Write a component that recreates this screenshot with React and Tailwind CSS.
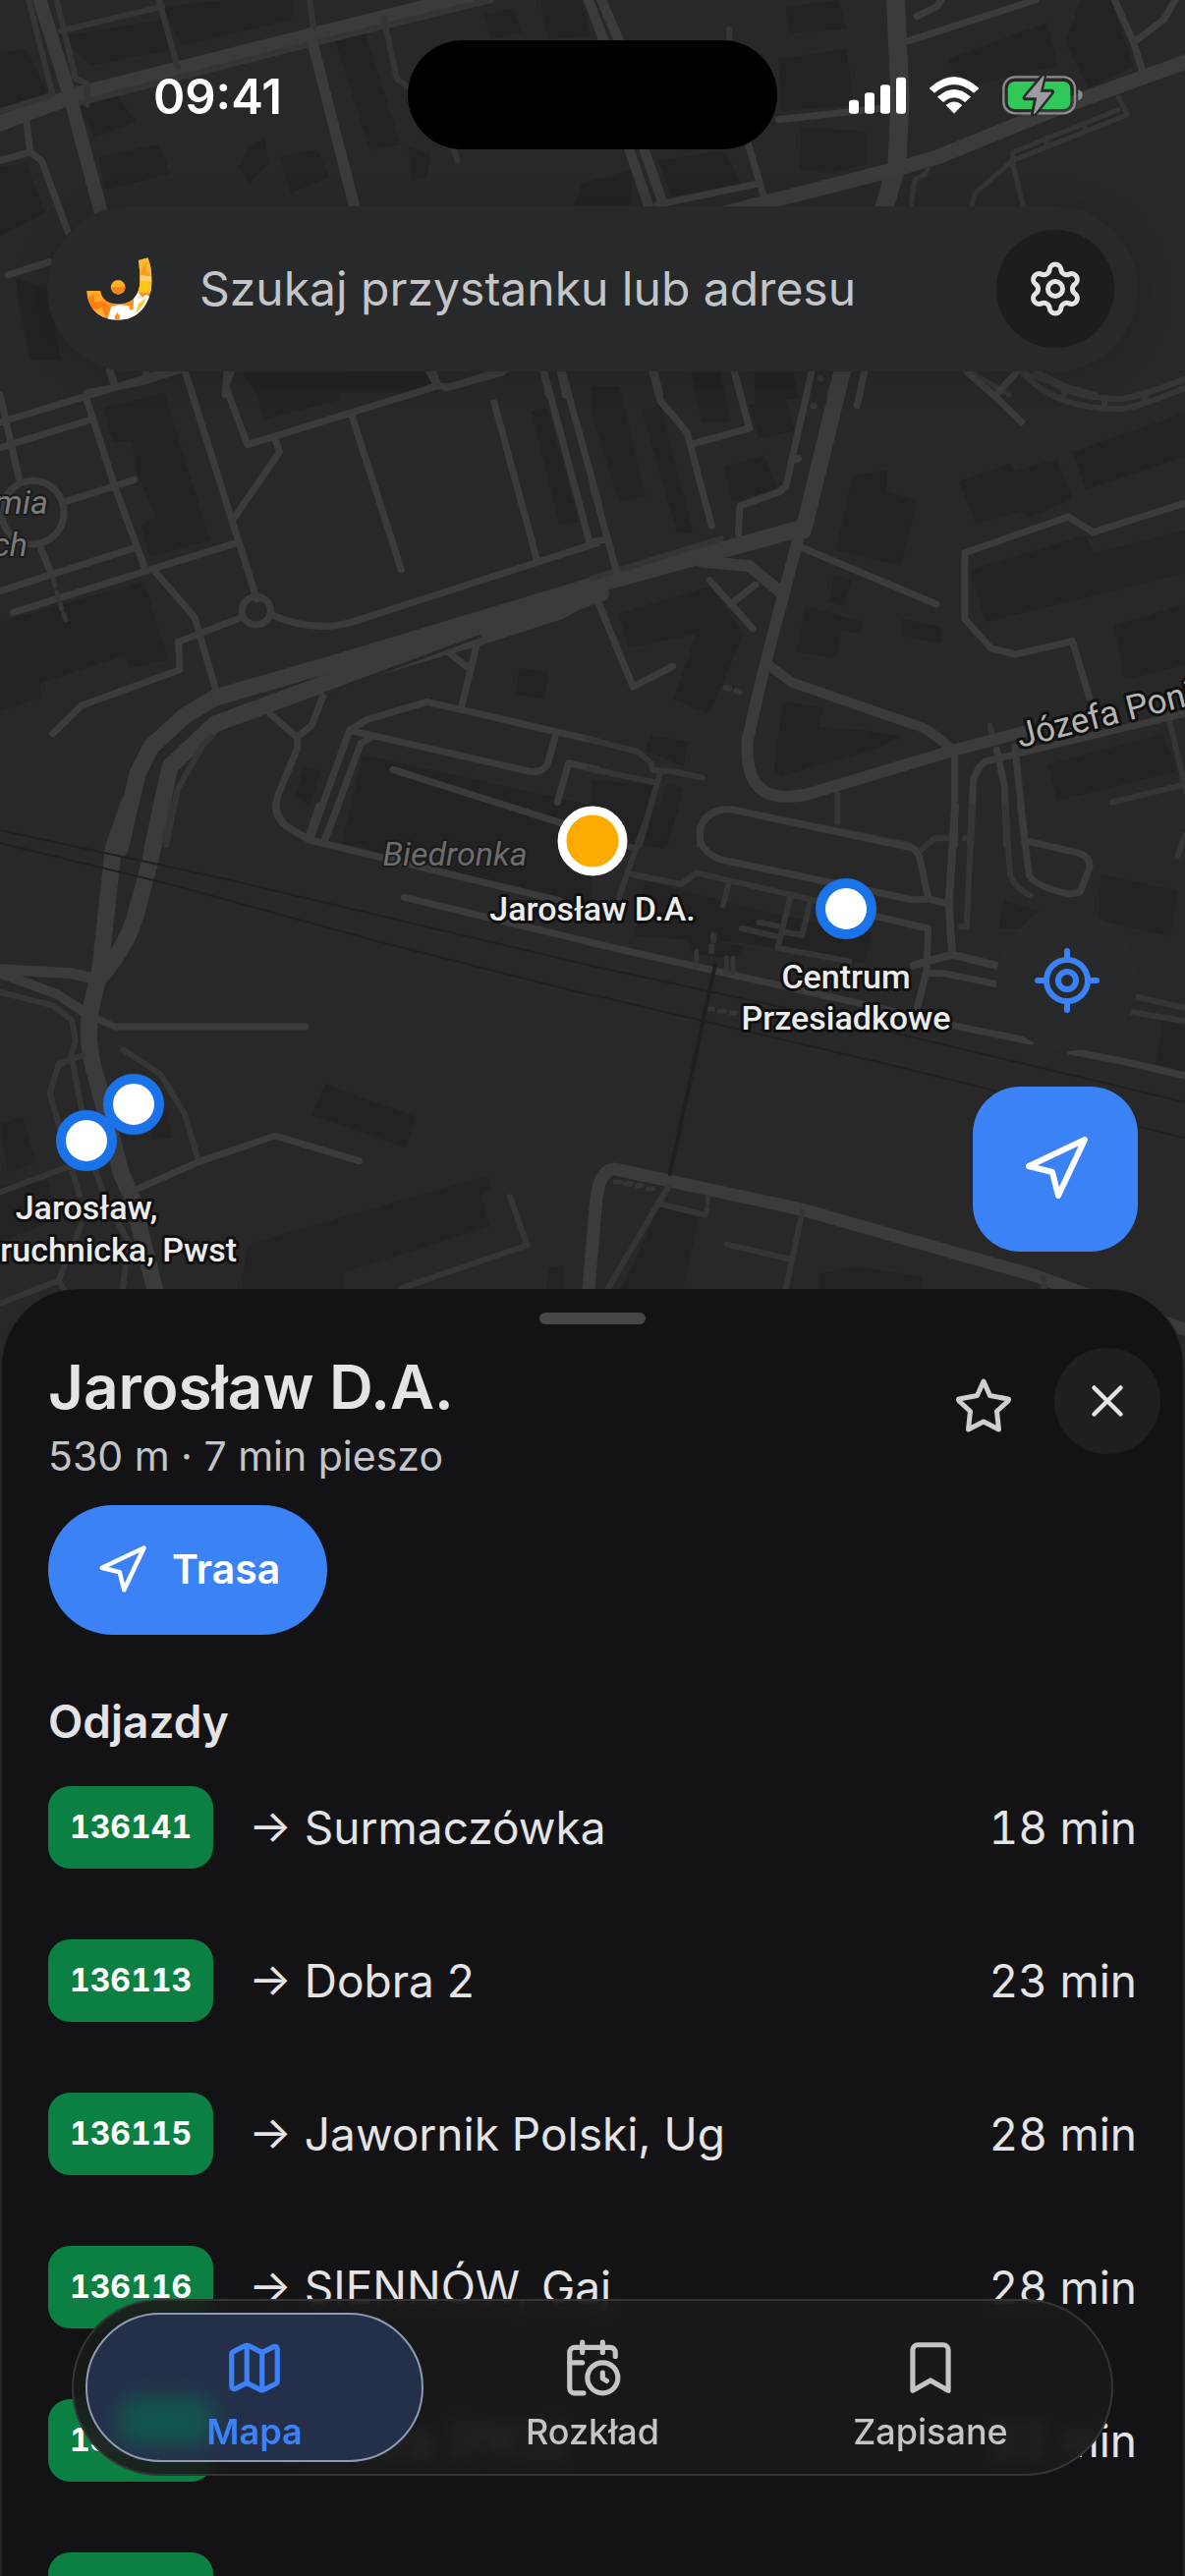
import {
  Bookmark,
  CalendarClock,
  LocateFixed,
  Map as MapIcon,
  Navigation,
  Settings,
  X,
} from "lucide-react";

const departures = [
  { line: "136141", to: "Surmaczówka", time: "18 min" },
  { line: "136113", to: "Dobra 2", time: "23 min" },
  { line: "136115", to: "Jawornik Polski, Ug", time: "28 min" },
  { line: "136116", to: "SIENNÓW, Gaj", time: "28 min" },
  { line: "136117", to: "Dobra (PKS)", time: "33 min" },
  { line: "136118", to: "Surmaczówka", time: "38 min" },
];

/* The street plan is split into tiles; each tile has its own drawing units. */
const tiles = [
  {
    place: "scale(.769133 .333333)",
    buildings:
      "M80 110L215 60L230 150L120 200ZM215 20L300 0H390L385 60L240 140ZM105 325L150 280L180 370L125 420ZM130 480L210 440L225 530L140 580ZM330 450L350 420L355 500L330 560L315 510ZM370 480L420 455L435 540L385 590ZM440 100L480 80L530 440L490 460ZM540 450L570 470L565 540L545 550ZM640 45L680 25L690 100L650 120ZM715 0H770L780 110L725 120ZM1040 20L1110 0L1120 90L1045 100ZM1030 180L1120 150L1130 320L1035 340ZM1255 180L1385 70L1400 200L1270 270ZM1430 0H1470L1500 200L1440 270L1410 130ZM1060 390L1145 400V500L1100 530L1058 515ZM870 490L960 460L980 560L890 600ZM0 160L35 150L65 290L0 330ZM0 510L35 500L60 650L0 720ZM770 560L835 520V625H760ZM320 1140L560 1133L580 1200H340ZM20 850L65 880L80 1100L40 1100Z",
    roads: [
      [16, "M-10 385L100 290L410 110L620 -10"],
      [6, "M95 320L410 135L650 0M75 0L100 240L115 255V320M38 0L70 290L0 340M410 0L415 90M210 0L235 205M80 95L215 20M508 55L525 240L545 275M600 450L605 490M965 90V130"],
      [14, "M52 -5L92 290L135 660"],
      [11, "M410 100L470 640"],
      [10, "M778 -5L800 130M795 -5L820 130M830 440L860 640M850 440L880 640"],
      [7, "M870 625L1005 560M990 440L1012 610M1030 365L1190 325M1195 130L1370 0M1213 50L1240 20L1245 0M1475 0L1500 130L1512 220M1500 130L1540 60L1555 0M35 370L40 465L0 490M40 465L55 490L90 710M10 840L65 800"],
      [5, "M1480 297L1492 350L1340 490M1480 335L1340 465V490M1385 420V445M1435 375V400M1340 490L1290 590L1285 640M1340 500L1355 640M1228 510L1225 530L1210 550L1205 640"],
      [19, "M1185 -5L1191 300L1187 500L1168 650"],
      [15, "M960 650L1180 520L1240 480L1400 330L1580 180"],
      [7, "M145 1125L152 1175M115 1200L190 1165L250 1120M300 1120V1150L298 1205M565 1120L578 1178M590 1185L680 1120M718 1120L726 1205M740 1120L748 1205M865 1120L873 1205M970 1120L980 1205"],
      [17, "M1118 1110L1105 1210"],
      [5, "M1280 1130L1335 1205M1345 1130L1380 1160L1450 1205M1370 1133L1420 1190"],
    ],
  },
  {
    place: "translate(0 380) scale(.384566 .333333)",
    buildings:
      "M275 105L435 60L555 510L395 560L375 460L415 440L360 300L350 210L300 210ZM0 760L380 635L445 875L345 900L330 860L105 945L110 990L0 1030ZM660 0H870L900 80L700 140ZM1405 115L1450 105L1530 455L1480 460ZM1375 900L1450 915L1440 995L1365 980ZM960 1165L1568 1320V1440H905ZM805 1200L850 1215L820 1315L780 1295Z",
    roads: [
      [7, "M0 150L440 -5M290 -5L302 35M385 0L400 15M0 227L238 142M228 75L305 350L385 600M0 65L50 320M165 395L355 325M0 665L350 535M35 730L625 518M490 -5L625 490L680 690M612 -5L597 40L655 218L1160 38L1190 42L1330 -3M1145 -5L1160 35M728 200L740 240L620 440M930 125L1062 600M1308 90L1420 565M1440 -5L1560 515M1488 -5L1585 400M715 735C780 770 850 785 930 760L1580 518M640 745L472 820L476 905L215 1015L140 1100M410 605L515 745L572 970"],
      [7, "M5 425A82 97 0 0 1 169 425A82 97 0 0 1 5 425M105 525L135 610M640 725A38 43 0 0 1 716 725A38 43 0 0 1 640 725"],
      [5, "M140 625L146 650M150 668L156 690M160 705L163 720M168 735L174 752"],
      [17, "M1590 640L900 880L570 990L490 1045L400 1140L365 1220L318 1450"],
      [17, "M1590 672L1250 810L900 930L570 1070L450 1200L403 1450"],
      [6, "M560 1110L540 1130L470 1270L440 1440"],
      [7, "M715 1040L785 1110M855 985L825 1075L787 1110V1145L735 1290Q722 1345 760 1385L820 1425L870 1440M1190 855L1240 900M1260 835L1222 1015M820 1425L925 1090L970 1058L1130 1003L1580 1123M860 1425L955 1130L985 1108M925 1090L1400 1215Q1440 1220 1450 1190L1470 1105M1475 1310L1505 1190L1580 1210M1040 1210L1490 1375"],
    ],
    fill: "M1580 620V690L1490 750L1260 835L1130 840L1250 735Z",
  },
  {
    place: "translate(603 380) scale(.384566 .333333)",
    buildings:
      "M0 40H70L140 375L70 395L0 130ZM130 110L180 100L265 485L225 490ZM260 0H340L365 145L290 150ZM430 0H530L545 75L430 95ZM415 95L510 75L535 175L440 200ZM350 285L455 250L490 355L370 390ZM690 310L780 295L778 360L858 390L815 588L645 540ZM970 330L1105 275L1115 300L1230 260L1270 385L1150 440L1135 420L1015 460ZM1270 240L1568 120V255L1305 355ZM1000 600L1305 495L1325 550L1568 480V610L1040 760ZM1380 770L1568 705V890L1410 935ZM1205 1195L1510 1100L1545 1215L1230 1305ZM70 735L310 650L400 795L310 1040L215 995L275 795L95 840ZM565 710L715 760L705 795L660 785L645 870L540 850ZM640 615L685 630L665 710L625 700ZM820 750L925 775L920 825L815 800ZM505 1000L610 1020L600 1080L720 1090L740 1150L500 1230L480 1210ZM155 1105L255 1125L240 1200L140 1150ZM0 1240L165 1260L115 1440H0ZM195 1255L240 1265L200 1440H150ZM725 1090L820 1110L740 1150Z",
    roads: [
      [17, "M662 -10L558 480"],
      [17, "M-20 655L555 472"],
      [12, "M550 480L450 920L410 1120Q400 1300 520 1292Q560 1290 590 1278L960 1150L1140 1095"],
      [12, "M290 575L415 588L500 670"],
      [6, "M0 625L340 505"],
      [10, "M465 890L530 945L870 1080Q920 1110 950 1150"],
      [7, "M550 530L910 705M375 -5L415 168L265 215M158 -5L180 85L250 180L315 465M580 -5L512 345L495 362L390 405L386 490M535 265L545 260M0 340L65 610M0 515L35 507M720 -5L700 98M990 -5L1065 70L1135 148M1065 70L1120 0M1580 392L1325 485L1260 438L985 548V750L1055 840L1120 858L1270 818L1315 990M10 685L107 957L212 895M310 632L425 780M365 705L432 645"],
      [6, "M1140 0C1220 100 1330 110 1400 108C1450 100 1500 75 1580 40M1175 -5C1240 60 1320 80 1400 78C1450 70 1520 40 1580 12M1250 55L1245 70M1355 80V105M1463 68V85"],
      [6, "M-10 1117L120 1155L155 1190L160 1212L210 1215L290 1235M-10 1207L170 1250M180 1215L125 1440M283 1440L290 1370Q310 1325 370 1332L840 1440M648 1285V1370M1520 1030L1575 1290M1375 1310L1568 1255M1052 1075L1056 1095M352 960L362 962M380 970L390 974M602 15L605 16M583 100L587 100"],
      [7, "M958 1170V1440M1000 1440L1008 1240Q1020 1200 1040 1185L1580 1035M1070 1150L1090 1260L1097 1440M1118 1140L1145 1440"],
    ],
  },
  {
    place: "translate(0 820) scale(.384566 .333333)",
    buildings:
      "M860 850L1100 950L1075 1045L825 945ZM655 1340L1290 1130L1300 1170L1275 1190L1295 1285L910 1425L905 1475H640ZM0 970L60 950L95 1090L20 1120ZM0 1160L130 1145L140 1270L0 1330ZM410 960L440 940L455 1015L400 1020ZM930 0H1568V320L905 110ZM1450 1410L1490 1405V1475H1445Z",
    roads: [
      [17, "M342 -10L300 130L265 500L240 620C228 700 240 780 255 830L320 1120L350 1200L415 1500"],
      [17, "M430 -10L395 180L360 330Q340 420 268 520"],
      [6, "M457 -5L437 105M-5 568L140 610L190 655L200 720L188 760L215 920L230 1040L270 1170M325 745L425 820L490 945L525 1085M220 762L155 790L132 880L210 1190M0 1180L175 1105M215 1280L155 1450L0 1520M155 1450L175 1490M310 1270L340 1330L325 1475M1060 1475L1395 1342L1350 1195"],
      [11, "M-10 500L190 512L250 530"],
      [10, "M0 512L150 575L230 635"],
      [7, "M255 650L305 675H808M345 1180L525 1088L728 1008L950 1085M730 -10Q725 35 760 65L820 105L855 115L1480 290M815 100L845 0M855 115L895 0M1070 280L1580 422"],
    ],
    rails: "M0 75L600 225L1568 490M0 115L450 240L1000 415L1568 580",
  },
  {
    place: "translate(603 820) scale(.384566 .333333)",
    buildings:
      "M140 230L480 330L740 390L720 480L400 420L110 400ZM1345 210L1550 260L1530 400L1340 350ZM1090 290L1180 320L1130 375H1075ZM1510 650L1568 680V810L1490 790ZM180 1220L280 1260L240 1475H75ZM600 1430L700 1405L870 1440V1475H600ZM160 0H230L190 130L120 120ZM250 400L400 430L380 470L260 450Z",
    roads: [
      [6, "M155 0L70 280M95 125L115 130M105 210L235 240L275 205L590 290M360 240L345 305M525 270L490 435L680 475M577 290L555 395L500 385M395 375L490 400M860 145L905 100H940M985 100H1000M1005 0L990 370H975M1093 0L1105 210Q1115 250 1160 275M1440 585L1580 620M1425 630L1580 660M648 0V50M1568 90L1548 155M440 357L455 359M465 362L490 368M320 397V412M315 430V445"],
      [7, "M285 110L283 70Q310 5 370 12L850 130L865 155L888 280M285 110Q300 150 340 165L850 288L890 285L940 300M720 330L888 375L885 500L860 615M885 512H930L1068 545M1133 0L1155 210Q1165 245 1260 270L1290 265L1315 190Q1320 150 1270 140L1155 110M-10 417L480 545L710 605L950 670L1160 720M1265 750L1400 780L1580 828"],
      [8, "M960 0L943 300L952 455L850 487M952 455L1068 488"],
      [13, "M-12 1500L10 1200Q20 1110 60 1110L560 1235L1170 1435L1580 1605"],
      [5, "M275 445V490M355 465V510M372 465V510M305 620H318M335 628H348M368 633H378M60 1150H75M87 1155H102M117 1160H130M147 1170H160M305 1195V1215M303 1230V1240"],
      [6, "M200 1165L40 1475M175 1215L297 1250M555 1240L512 1475M355 1340L525 1385M1195 1440V1475"],
    ],
    rails: "M0 490L600 640L1568 905M0 578L800 795L1568 1015",
    path: "M325 485L205 1125",
  },
];

const halo = {
  paintOrder: "stroke",
  stroke: "#101010",
  strokeWidth: 6,
  strokeLinejoin: "round",
};

function StreetMap() {
  return (
    <svg
      className="absolute inset-0 h-full w-full"
      viewBox="0 0 1206 1392"
      preserveAspectRatio="xMidYMin slice"
      aria-label="Mapa"
      fontFamily="Roboto, sans-serif"
    >
      <rect width="1206" height="1392" fill="#282828" />
      {tiles.map((t) => (
        <path key={t.place} transform={t.place} d={t.buildings} fill="#232323" />
      ))}
      {tiles.map((t) => (
        <g
          key={t.place}
          transform={t.place}
          fill="none"
          strokeLinecap="round"
          strokeLinejoin="round"
        >
          {t.roads.map(([w, d]) => (
            <path
              key={d}
              d={d}
              strokeWidth={w}
              stroke={w < 7 ? "#353535" : "#3b3b3b"}
              vectorEffect="non-scaling-stroke"
            />
          ))}
          {t.fill && <path d={t.fill} fill="#3b3b3b" stroke="none" />}
          {t.rails && (
            <path d={t.rails} stroke="#202020" strokeWidth="2" vectorEffect="non-scaling-stroke" />
          )}
          {t.path && (
            <path d={t.path} stroke="#202020" strokeWidth="4" vectorEffect="non-scaling-stroke" />
          )}
        </g>
      ))}
      <path d="M330 706L490 647" stroke="#282828" strokeWidth="3" />

      <g {...halo} strokeWidth="4" stroke="#1b1b1b" fill="#7b7b7b" fontSize="34" fontStyle="italic">
        <text x="49" y="523" textAnchor="end">mia</text>
        <text x="28" y="566" textAnchor="end">ch</text>
        <text x="463" y="881" textAnchor="middle" fill="#6c6c6c">Biedronka</text>
      </g>
      <text {...halo} fill="#b4b4b4" fontSize="35" transform="translate(1038 761) rotate(-14)">
        Józefa Poniatowskiego
      </text>

      <g fill="#ffffff" stroke="#1a73e8" strokeWidth="10">
        <circle cx="136" cy="1124" r="26" />
        <circle cx="88" cy="1161" r="26" />
        <circle cx="861" cy="925" r="26" />
      </g>
      <circle cx="603" cy="856" r="31" fill="#f9ab00" stroke="#ffffff" strokeWidth="9" />
      <g {...halo} fill="#ececec" fontSize="34" fontWeight="500" textAnchor="middle">
        <text x="603" y="937">Jarosław D.A.</text>
        <text x="861" y="1006">Centrum</text>
        <text x="861" y="1048">Przesiadkowe</text>
        <text x="88" y="1241">Jarosław,</text>
        <text x="241" y="1284" textAnchor="end">Pruchnicka, Pwst</text>
      </g>
    </svg>
  );
}

function StatusIcons() {
  return (
    <div className="flex items-center gap-6">
      <svg className="h-10 w-[58px]" viewBox="45 52 174 120" fill="#fff">
        <rect x="45" y="126" width="30" height="42" rx="9" />
        <rect x="93" y="104" width="30" height="64" rx="9" />
        <rect x="141" y="80" width="30" height="88" rx="9" />
        <rect x="189" y="57" width="30" height="111" rx="9" />
      </svg>
      <svg className="h-10 w-[50px]" viewBox="287 52 150 120" fill="#fff">
        <path d="M287 91Q362 22 437 91L422 104Q362 52 302 104Z" stroke="#fff" strokeWidth="2" strokeLinejoin="round" />
        <path d="M312 117Q362 73 412 117L395 132Q362 104 329 132Z" stroke="#fff" strokeWidth="2" strokeLinejoin="round" />
        <path d="M338 142Q362 123 386 142L362 167Z" stroke="#fff" strokeWidth="2" strokeLinejoin="round" />
      </svg>
      <svg className="h-[42px] w-[82px]" viewBox="505 50 246 126">
        <rect x="509" y="57" width="218" height="111" rx="35" fill="none" stroke="#8b8b8d" strokeWidth="7" />
        <path d="M737 96Q750 100 750 112Q750 124 737 129Z" fill="#8b8b8d" />
        <rect x="522" y="71" width="191" height="84" rx="21" fill="#30c859" />
        <path d="M631 54L576 120H611L601 171L655 103H620Z" fill="#97979a" stroke="#282828" strokeWidth="18" strokeLinejoin="round" />
        <path d="M631 56L578 118H613L603 168L653 105H619Z" fill="#9c9ca0" stroke="#9c9ca0" strokeWidth="4" strokeLinejoin="round" />
      </svg>
    </div>
  );
}

function Logo() {
  return (
    <svg className="h-16 w-[67px] shrink-0" viewBox="80 667 200 192" aria-hidden="true">
      <clipPath id="arc">
        <path d="M80 769H122C126 795 147 809 175 809C218 809 243 784 243 735C243 714 241 695 238 676L267 668C275 688 279 710 279 735C279 812 236 858 176 858C120 858 82 823 80 769Z" />
      </clipPath>
      <g clipPath="url(#arc)">
        <rect x="80" y="667" width="200" height="192" fill="#f7931e" />
        <path d="M235 667H280V770H222Z" fill="#fcb731" />
        <path d="M248 700L262 684V716L270 712V735L244 728Z" fill="#f3a01f" />
        <path d="M243 720L280 726V742L240 738Z" fill="#fbd27a" />
        <path d="M240 740H280V775H236Z" fill="#ffc61a" />
        <path d="M80 769H122L130 800L112 805L100 800V782L84 790Z" fill="#ffa726" />
        <path d="M88 785H104V805L125 800L150 816L140 850L95 830Z" fill="#ff7f11" />
        <path d="M95 822L112 828L126 818L142 860H105Z" fill="#fbb03b" />
        <path d="M142 860L156 816L180 812L210 815V827H222L226 760L231 748L238 775L250 790L262 780L272 788L250 835L200 860Z" fill="#fff" />
        <path d="M166 860V846L174 835L181 846V860Z" fill="#f7931e" />
        <path d="M238 808L262 790L250 815L230 838Z" fill="#ffc83d" />
      </g>
      <circle cx="176" cy="758" r="22" fill="#fdb022" />
      <path d="M154 758H198A22 22 0 0 1 160 772Z" fill="#f58220" />
    </svg>
  );
}

function StarIcon() {
  return (
    <svg className="size-14" viewBox="0 0 56 56" fill="none" stroke="#cfcfd1" strokeWidth="5" strokeLinejoin="round" aria-hidden="true">
      <path d="M28 4L34.5 18.5L53 22Q54 22 53 24L41.5 34.5L43.5 53L28 45L12.5 53L14.5 34.5L3 24Q2 22 3 22L21.5 18.5Z" />
    </svg>
  );
}

const tabs = [
  { label: "Mapa", Icon: MapIcon, active: true },
  { label: "Rozkład", Icon: CalendarClock },
  { label: "Zapisane", Icon: Bookmark },
];

export default function App() {
  return (
    <div className="flex h-screen flex-col overflow-hidden bg-[#282828] font-[Inter,sans-serif] text-[#e4e4e6]">
      <section className="relative flex shrink-0 flex-col pt-[41px] pb-[118px]">
        <StreetMap />

        <header className="relative grid grid-cols-[1fr_376px_1fr] items-center">
          <time className="pt-1 pl-7 text-center text-[49px] leading-[56px] font-semibold text-white">09:41</time>
          <div className="h-[111px] rounded-full bg-black" />
          <div className="flex justify-center pr-8">
            <StatusIcons />
          </div>
        </header>

        <div className="relative mx-12 mt-[58px] flex h-[168px] items-center rounded-full bg-[#28292b] pr-6 pl-10 shadow-[0_4px_36px_rgba(0,0,0,0.14)]">
          <Logo />
          <input
            type="search"
            aria-label="Szukaj przystanku lub adresu"
            placeholder="Szukaj przystanku lub adresu"
            className="ml-12 min-w-0 flex-1 bg-transparent text-[48px] leading-[60px] text-[#e4e4e6] outline-none placeholder:text-[#c4c5c8]"
          />
          <button type="button" aria-label="Ustawienia" className="flex size-30 shrink-0 items-center justify-center rounded-full bg-[#1c1d1f]">
            <Settings className="size-15" />
          </button>
        </div>

        <div className="relative mt-[548px] mr-12 flex flex-col items-end gap-9 self-end">
          <button type="button" aria-label="Moja lokalizacja" className="flex size-36 items-center justify-center rounded-full bg-[#28292b]">
            <LocateFixed className="size-18 text-[#3c82f7]" />
          </button>
          <button type="button" aria-label="Wyznacz trasę" className="flex size-42 items-center justify-center rounded-[48px] bg-[#3c82f7] text-white">
            <Navigation className="size-18" />
          </button>
        </div>
      </section>

      <main className="relative -mt-20 flex min-h-0 flex-1 flex-col overflow-hidden rounded-t-[80px] border-x-2 border-[#252628] bg-[#131315] px-[47px] pt-6">
        <div className="h-3 w-27 shrink-0 self-center rounded-full bg-[#474749]" />

        <div className="mt-6 flex shrink-0 items-start justify-between">
          <div>
            <h1 className="text-[62px] leading-[80px] font-semibold">Jarosław D.A.</h1>
            <p className="mt-1 text-[41px] leading-[52px] text-[#c4c5c8]">530 m · 7 min pieszo</p>
          </div>
          <div className="-mr-6 flex items-center gap-11">
            <button type="button" aria-label="Dodaj do zapisanych" className="pt-2">
              <StarIcon />
            </button>
            <button type="button" aria-label="Zamknij" className="flex size-27 items-center justify-center rounded-full bg-[#1e1f21]">
              <X className="size-[54px]" />
            </button>
          </div>
        </div>

        <button type="button" className="mt-6 flex h-33 shrink-0 items-center gap-6 self-start rounded-full bg-[#3c82f7] px-12 text-[41px] font-semibold text-white">
          <Navigation className="size-[54px]" />
          Trasa
        </button>

        <h2 className="mt-[58px] shrink-0 text-[46px] leading-[60px] font-semibold">Odjazdy</h2>
        <ul className="mt-9 flex flex-col gap-18">
          {departures.map((d) => (
            <li key={d.line} className="flex h-21 shrink-0 items-center text-[46px] leading-[60px]">
              <span className="flex h-21 w-42 items-center justify-center rounded-[22px] bg-[#0c8042] text-[32px] font-bold text-white tabular-nums">
                {d.line}
              </span>
              <span className="ml-9 flex-1">→ {d.to}</span>
              <span className="tabular-nums">{d.time}</span>
            </li>
          ))}
        </ul>
      </main>

      <nav className="fixed inset-x-0 bottom-0 mx-[73px] mb-[102px] grid h-45 grid-cols-3 overflow-hidden rounded-full border-2 border-[#343434] bg-[#191919]/90 p-3 backdrop-blur-sm">
        {tabs.map(({ label, Icon, active }) => (
          <button
            key={label}
            type="button"
            aria-current={active ? "page" : undefined}
            className={
              active
                ? "relative flex flex-col items-center justify-center gap-3 overflow-hidden rounded-full border-2 border-[#8f9bb3] bg-[#24304a] pt-4 font-semibold text-[#3c82f7]"
                : "flex flex-col items-center justify-center gap-3 pt-4 font-medium text-[#c4c5c8]"
            }
          >
            {active && (
              <span className="absolute bottom-4 left-8 h-12 w-24 rounded-2xl bg-[#12574f] blur-md" />
            )}
            <Icon className="relative size-[62px]" />
            <span className="relative text-[36px] leading-[44px]">{label}</span>
          </button>
        ))}
      </nav>
    </div>
  );
}
